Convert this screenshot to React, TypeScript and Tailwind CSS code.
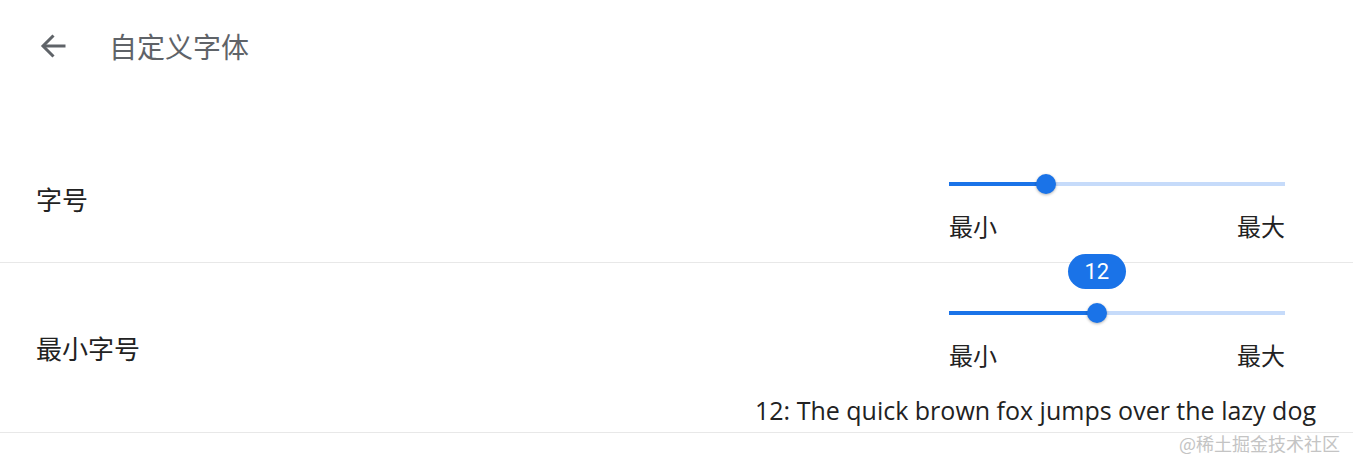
import React from "react";

const cjk = { fontFamily: '"Noto Sans CJK SC", "Noto Sans", sans-serif' };

function Slider({ value, bubble }: { value: number; bubble?: string }) {
  return (
    <div className="relative h-[24px] w-[336px]">
      <div className="absolute left-0 right-0 top-[11px] h-[4px] bg-[#c6dbfa]" />
      <div
        className="absolute left-0 top-[11px] h-[4px] bg-[#1a73e8]"
        style={{ width: `${value * 100}%` }}
      />
      <div
        className="absolute top-[3px] h-[20px] w-[20px] -ml-[10px] rounded-full bg-[#1a73e8] shadow-[0_1px_3px_rgba(0,0,0,0.3)]"
        style={{ left: `${value * 100}%` }}
      />
      {bubble && (
        <div
          className="absolute top-[-46px] flex h-[35px] w-[58px] -ml-[29px] items-center justify-center rounded-full bg-[#1a73e8] text-[22px] text-white"
          style={{ left: `${value * 100}%`, fontFamily: "Roboto, sans-serif" }}
        >
          {bubble}
        </div>
      )}
    </div>
  );
}

function MinMax() {
  return (
    <div className="mt-[15px] flex w-[336px] justify-between text-[24px] leading-[32px] text-[#222]" style={cjk}>
      <span>最小</span>
      <span>最大</span>
    </div>
  );
}

export default function App() {
  return (
    <div className="relative h-[467px] w-full overflow-hidden bg-white">
      {/* Header */}
      <div className="flex h-[92px] items-center pl-[40px]">
        <svg width="26" height="26" viewBox="0 0 26 26" fill="none" stroke="#5f6368" strokeWidth="3">
          <path d="M25.5 13H4" />
          <path d="M13.5 2.5L3 13L13.5 23.5" />
        </svg>
        <span className="ml-[43px] text-[28px] text-[#5f6368]" style={cjk}>
          自定义字体
        </span>
      </div>

      <div className="h-[49px]" />

      {/* Row 1 */}
      <div className="flex h-[122px] justify-between border-b border-[#e8e8e8] pl-[36px] pr-[68px]">
        <div className="-mt-[6px] self-center text-[26px] text-[#222]" style={cjk}>
          字号
        </div>
        <div className="flex flex-col pt-[30px]">
          <Slider value={0.29} />
          <MinMax />
        </div>
      </div>

      {/* Row 2 */}
      <div className="flex h-[170px] justify-between border-b border-[#e8e8e8] pl-[36px] pr-[37px]">
        <div className="self-center text-[26px] text-[#222]" style={cjk}>
          最小字号
        </div>
        <div className="flex flex-col items-end pt-[37px]">
          <div className="mr-[31px] flex flex-col">
            <Slider value={0.44} bubble="12" />
            <MinMax />
          </div>
          <div
            className="mt-[24px] text-[25px] leading-[30px] text-[#222]"
            style={{ fontFamily: '"Open Sans", sans-serif' }}
          >
            12: The quick brown fox jumps over the lazy dog
          </div>
        </div>
      </div>

      {/* Watermark */}
      <div className="absolute right-[13px] top-[430px] text-[18px] text-[#c4c4c4]" style={cjk}>
        @稀土掘金技术社区
      </div>
    </div>
  );
}
